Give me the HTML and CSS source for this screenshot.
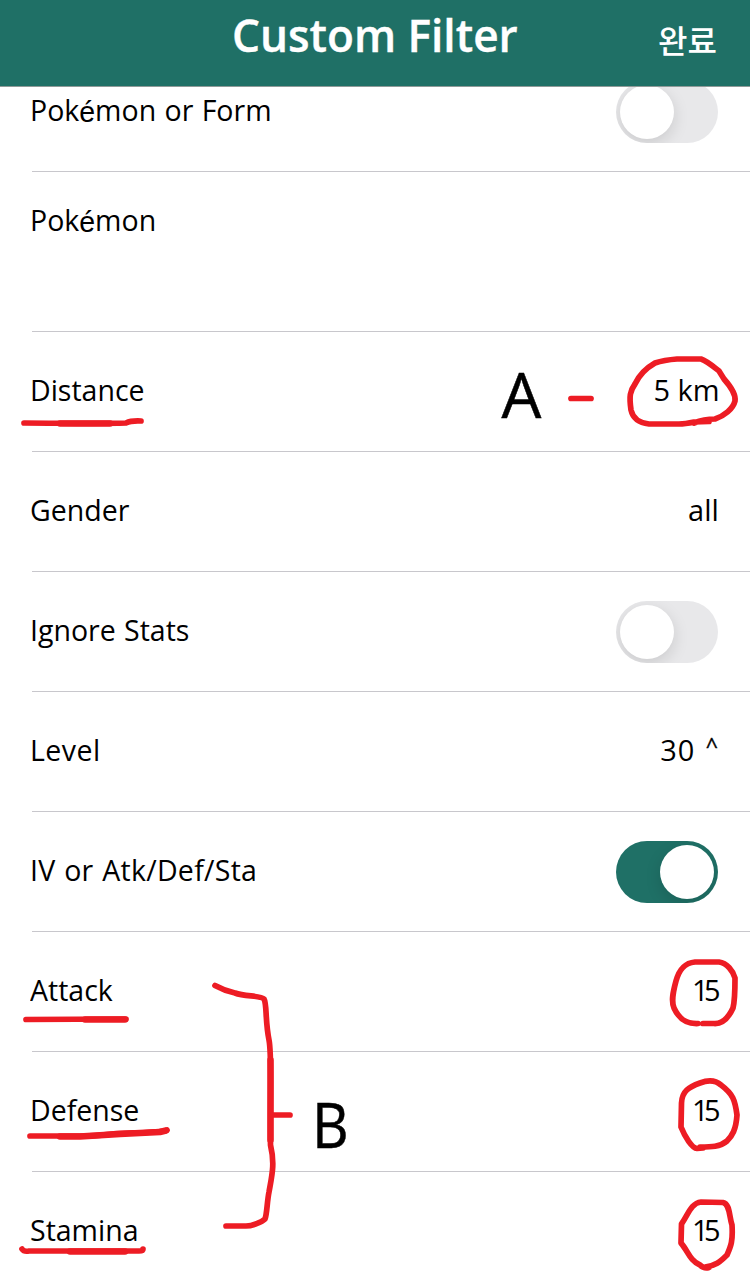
FILE: index.html
```
<!DOCTYPE html>
<html lang="ko">
<head>
<meta charset="utf-8">
<title>Custom Filter</title>
<link rel="stylesheet" href="styles.css">
</head>
<body>
<div class="screen">
  <header class="bar">
    <h1 class="title">Custom Filter</h1>
    <span class="done">완료</span>
  </header>
  <main class="list">
    <div class="row row-first"><span class="label">Pok<span class="accent">é</span>mon or Form</span><span class="toggle"><span class="knob"></span></span></div>
    <div class="row row-tall"><span class="label">Pok<span class="accent">é</span>mon</span></div>
    <div class="row"><span class="label">Distance</span><span class="value">5 km</span></div>
    <div class="row"><span class="label">Gender</span><span class="value">all</span></div>
    <div class="row"><span class="label">Ignore Stats</span><span class="toggle"><span class="knob"></span></span></div>
    <div class="row"><span class="label level-label">Level</span><span class="value level">30<span class="caret">^</span></span></div>
    <div class="row"><span class="label iv-label">IV or Atk/Def/Sta</span><span class="toggle on"><span class="knob"></span></span></div>
    <div class="row"><span class="label">Attack</span><span class="value stat">15</span></div>
    <div class="row"><span class="label">Defense</span><span class="value stat">15</span></div>
    <div class="row row-last"><span class="label">Stamina</span><span class="value stat">15</span></div>
  </main>
  <svg class="notes" viewBox="0 0 750 1279">
    <g class="ink">
      <path d="M24 423 C60 423 95 424 126 423 Q131 420.500 141 421"/>
      <path d="M571 398.500H591"/>
      <path d="M709 421.500 L694 422 Q685 424 679 424 H649 C640 423 633 419 631 410 C629 396 630 391 635 384 Q641 371 655 363 Q664 360 677 359 H701 C707 361 714 367 719 371 L724 379 C732 388 736 395 735 401 C733 409 724 416 715 419 Q704 419 694 423"/>
      <path d="M26 1019.500 L126 1019"/>
      <path d="M30 1136 L84 1136 C105 1136 118 1132 140 1133 L165 1131 L167 1130"/>
      <path d="M22 1249 Q24 1252 29 1251 H139 Q143 1251 143 1249"/>
      <path d="M215 985.500 Q225 991 235 993 C245 997 260 995 264 999 C267 1004 265 1020 269 1040 C272 1055 270 1090 270.500 1145 C275 1164 272 1175 269 1192 C267 1202 267 1214 265 1219 C262 1222 252 1226 246 1226 H226"/>
      <path d="M271 1115H290"/>
      <path d="M698 1023.500 C686 1024 679 1019 674 1008 C671 1001 673 992 676 981 C679 970 684 963 695 962 L719 962 C727 963 733 971 735 978 C735 991 735 1000 733 1008 C728 1019 722 1024 714 1023.500 H703"/>
      <path d="M703 1148 L697 1148.500 C692 1148 685 1137 681 1127 L681.500 1103 C682 1091 689 1087 700 1083 Q713 1078 721 1085 C733 1094 735 1100 737 1115 C736 1130 732 1136 727 1141 C720 1147 711 1147 700 1147"/>
      <path d="M709 1267.500 Q704 1269 700 1265 C690 1261 688 1251 681 1243 L681.500 1224 C688 1215 691 1203 701 1202 L723 1202.500 C730 1204 729 1216 732 1225 C733 1241 731 1246 727 1255 C720 1262 715 1266 705 1267"/>
    </g>
    <path class="ink heavy" d="M60 423.500H110 M85 1019.500H125 M60 1136.500H80 L120 1134 L160 1132 L166 1130.500 M70 1251.500H125 M270.500 1060V1140"/>
    <text class="mark" x="501.500" y="418">A</text>
    <text class="mark" transform="translate(312 1148) scale(.9 1)">B</text>
  </svg>
</div>
</body>
</html>
```
FILE: styles.css
```
* { box-sizing: border-box; }
body { margin: 0; background: #fff; }
.screen {
  position: relative;
  width: 750px;
  height: 1279px;
  overflow: hidden;
  color: #000;
  font-family: "Open Sans", "Noto Sans CJK KR", sans-serif;
  font-size: 30px;
  line-height: 44px;
}
.bar {
  display: grid;
  grid-template-columns: 1fr auto 1fr;
  height: 87px;
  background: #1f7066;
  border-bottom: 1px solid #8f9a98;
  color: #fff;
}
.title {
  grid-column: 2;
  margin: 2px 0 0;
  font-size: 46px;
  line-height: 64px;
  font-weight: 600;
  white-space: nowrap;
  -webkit-text-stroke: .4px #fff;
  transform: scaleX(.96);
}
.done {
  justify-self: end;
  padding: 17px 33px 0 0;
  font-family: "Noto Sans CJK KR", sans-serif;
  font-size: 32px;
  font-weight: 500;
}
.list { height: 1192px; overflow: hidden; }
.row {
  display: flex;
  justify-content: space-between;
  align-items: flex-start;
  height: 120px;
  margin-left: 32px;
  padding: 36px 32px 0 0;
  border-bottom: 1px solid #c8c7cc;
}
.row-first { margin-top: -35px; }
.row-tall { height: 160px; padding-top: 26px; }
.row-last { border-bottom: 0; }
.label {
  margin-left: -2px;
  white-space: pre;
  word-spacing: 1px;
  transform: scaleX(.95);
  transform-origin: left;
}
.level-label { letter-spacing: .5px; }
.iv-label { letter-spacing: .3px; }
.value {
  margin-right: -1px;
  white-space: pre;
  transform: scaleX(.965);
  transform-origin: right;
}
.stat { letter-spacing: -4.5px; margin-right: 2px; }
.level { margin-right: -1px; letter-spacing: 1px; }
.caret { margin-left: 11px; font-size: 22px; vertical-align: 7px; line-height: 1; -webkit-text-stroke: .4px #000; }
.accent { font-family: "Liberation Sans", sans-serif; line-height: 1; vertical-align: -1px; }
.toggle {
  width: 102px;
  height: 62px;
  margin-top: -7px;
  padding: 4px;
  border-radius: 31px;
  background: #e8e8ea;
  overflow: hidden;
  display: flex;
}
.toggle.on { background: #1f7066; justify-content: flex-end; }
.knob {
  width: 54px;
  height: 54px;
  border-radius: 50%;
  background: #fff;
  box-shadow: 0 5px 16px rgba(0, 0, 0, .13);
}
.notes { position: absolute; left: 0; top: 0; width: 750px; height: 1279px; }
.ink { fill: none; stroke: #ed1c24; stroke-width: 5.700; stroke-linecap: round; stroke-linejoin: round; }
.heavy { stroke-width: 6.500; }
.mark { font-size: 63px; stroke: #000; stroke-width: .5px; }
```
